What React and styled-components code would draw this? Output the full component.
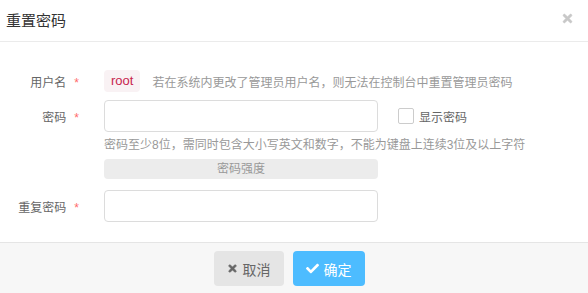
import React, { useState } from 'react';
import styled, { createGlobalStyle } from 'styled-components';
import { FaTimes, FaCheck } from 'react-icons/fa';

const GlobalStyle = createGlobalStyle`
  body {
    margin: 0;
    font-family: "Liberation Sans", "Noto Sans CJK SC", sans-serif;
    background: #fff;
  }
`;

const Dialog = styled.div`
  width: 588px;
  height: 293px;
  display: flex;
  flex-direction: column;
  background: #fff;
  overflow: hidden;
`;

const Header = styled.div`
  height: 41px;
  display: flex;
  align-items: center;
  justify-content: space-between;
  padding: 0 14px 0 6px;
  border-bottom: 1px solid #ebebeb;
`;

const Title = styled.h3`
  margin: 0;
  font-size: 15px;
  font-weight: normal;
  color: #333;
  padding-bottom: 3px;
`;

const Close = styled.span`
  color: #c8c8c8;
  font-size: 13px;
  display: flex;
  padding-bottom: 5px;
  svg {
    stroke: currentColor;
    stroke-width: 20px;
  }
`;

const Body = styled.div`
  flex: 1;
  padding: 28px 0 0;
`;

const Row = styled.div`
  display: grid;
  grid-template-columns: 80px 274px auto;
  column-gap: 24px;
  align-items: center;
  margin-top: ${(p) => p.$top || 0}px;
  margin-bottom: ${(p) => p.$gap || 0}px;
`;

const Label = styled.label`
  text-align: right;
  font-size: 12px;
  color: #666;
  padding-right: 1px;
`;

const Star = styled.span`
  color: #ff6b6b;
  margin-left: 8px;
`;

const Inline = styled.div`
  grid-column: 2 / 4;
  display: flex;
  align-items: center;
  gap: 12px;
`;

const Tag = styled.span`
  display: inline-block;
  height: 22px;
  line-height: 22px;
  padding: 0 7px;
  font-size: 13px;
  color: #c7254e;
  background: #f9f2f4;
  border-radius: 4px;
`;

const Hint = styled.span`
  font-size: 12px;
  color: #999;
`;

const Input = styled.input`
  box-sizing: border-box;
  width: 274px;
  height: 32px;
  border: 1px solid #dcdcdc;
  border-radius: 4px;
  outline: none;
  padding: 0 8px;
`;

const CheckLabel = styled.label`
  display: flex;
  align-items: center;
  gap: 5px;
  margin-left: -4px;
  font-size: 12px;
  color: #666;
`;

const Box = styled.span`
  box-sizing: border-box;
  width: 16px;
  height: 16px;
  border: 1px solid #ccc;
  border-radius: 2px;
  background: #fff;
`;

const Help = styled.div`
  grid-column: 2 / 4;
  font-size: 12px;
  color: #999;
  line-height: 16px;
  margin: 5px 0 6px;
`;

const Strength = styled.div`
  grid-column: 2;
  height: 20px;
  line-height: 20px;
  border-radius: 4px;
  background: #ececec;
  color: #999;
  font-size: 12px;
  text-align: center;
`;

const Footer = styled.div`
  height: 49px;
  border-top: 1px solid #e5e5e5;
  background: #f7f7f7;
  display: flex;
  align-items: center;
  justify-content: center;
  gap: 9px;
  padding-right: 10px;
  padding-top: 1px;
`;

const Button = styled.button`
  height: 35px;
  width: ${(p) => p.$w}px;
  border: none;
  border-radius: 4px;
  font-family: inherit;
  font-size: 14px;
  display: flex;
  align-items: center;
  justify-content: center;
  gap: 5px;
  background: ${(p) => (p.$primary ? '#4dbcff' : '#e5e5e5')};
  color: ${(p) => (p.$primary ? '#fff' : '#666')};
  svg {
    font-size: ${(p) => (p.$primary ? 13 : 11)}px;
    stroke: currentColor;
    stroke-width: ${(p) => (p.$primary ? 0 : 30)}px;
  }
`;

export default function App() {
  const [pwd, setPwd] = useState('');
  const [again, setAgain] = useState('');

  return (
    <Dialog>
      <GlobalStyle />
      <Header>
        <Title>重置密码</Title>
        <Close>
          <FaTimes />
        </Close>
      </Header>
      <Body>
        <Row $gap={8}>
          <Label>
            用户名<Star>*</Star>
          </Label>
          <Inline>
            <Tag>root</Tag>
            <Hint>若在系统内更改了管理员用户名，则无法在控制台中重置管理员密码</Hint>
          </Inline>
        </Row>
        <Row>
          <Label>
            密码<Star>*</Star>
          </Label>
          <Input type="password" value={pwd} onChange={(e) => setPwd(e.target.value)} />
          <CheckLabel>
            <Box />
            显示密码
          </CheckLabel>
          <span />
          <Help>密码至少8位，需同时包含大小写英文和数字，不能为键盘上连续3位及以上字符</Help>
          <span />
          <Strength>密码强度</Strength>
        </Row>
        <Row $top={11}>
          <Label>
            重复密码<Star>*</Star>
          </Label>
          <Input type="password" value={again} onChange={(e) => setAgain(e.target.value)} />
        </Row>
      </Body>
      <Footer>
        <Button $w={70}>
          <FaTimes />
          取消
        </Button>
        <Button $w={72} $primary>
          <FaCheck />
          确定
        </Button>
      </Footer>
    </Dialog>
  );
}
